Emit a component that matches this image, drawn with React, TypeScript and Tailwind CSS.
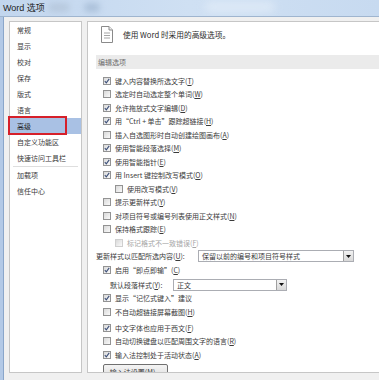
import React from 'react'

type Row =
    | { kind: 'check'; text: string; k?: string; on: boolean; indent?: boolean; off?: boolean; gap?: string }
    | { kind: 'select'; label: string; k: string; value: string; indent?: boolean; gap?: string }

const nav = ['常规', '显示', '校对', '保存', '版式', '语言', '高级', '自定义功能区', '快速访问工具栏']
const nav2 = ['加载项', '信任中心']

const rows: Row[] = [
    { kind: 'check', text: '键入内容替换所选文字', k: 'T', on: true },
    { kind: 'check', text: '选定时自动选定整个单词', k: 'W', on: false },
    { kind: 'check', text: '允许拖放式文字编辑', k: 'D', on: true },
    { kind: 'check', text: '用“Ctrl + 单击”跟踪超链接', k: 'H', on: true },
    { kind: 'check', text: '插入自选图形时自动创建绘图画布', k: 'A', on: false },
    { kind: 'check', text: '使用智能段落选择', k: 'M', on: true },
    { kind: 'check', text: '使用智能指针', k: 'E', on: true },
    { kind: 'check', text: '用 Insert 键控制改写模式', k: 'O', on: true },
    { kind: 'check', text: '使用改写模式', k: 'V', on: false, indent: true },
    { kind: 'check', text: '提示更新样式', k: 'Y', on: false },
    { kind: 'check', text: '对项目符号或编号列表使用正文样式', k: 'N', on: false },
    { kind: 'check', text: '保持格式跟踪', k: 'E', on: false },
    { kind: 'check', text: '标记格式不一致错误', k: 'F', on: false, indent: true, off: true },
    { kind: 'select', label: '更新样式以匹配所选内容', k: 'U', value: '保留以前的编号和项目符号样式' },
    { kind: 'check', text: '启用“即点即输”', k: 'C', on: true },
    { kind: 'select', label: '默认段落样式', k: 'Y', value: '正文', indent: true, gap: 'mt-[1.5px]' },
    { kind: 'check', text: '显示“记忆式键入”建议', on: true },
    { kind: 'check', text: '不自动超链接屏幕截图', k: 'H', on: false },
    { kind: 'check', text: '中文字体也应用于西文', k: 'F', on: true, gap: 'mt-[2.5px]' },
    { kind: 'check', text: '自动切换键盘以匹配周围文字的语言', k: 'R', on: false },
    { kind: 'check', text: '输入法控制处于活动状态', k: 'A', on: true },
]

function Box({ on, off }: { on: boolean; off?: boolean }) {
    return (
        <span
            className={`w-[8px] h-[8px] shrink-0 flex items-center justify-center border bg-gradient-to-br from-[#d9d9d9] to-[#fafafa] ${
                off ? 'border-[#cfcfcf]' : 'border-[#939393]'
            }`}
        >
            {on && (
                <svg width="6" height="6" viewBox="0 0 6 6">
                    <path d="M0.8 3.2 L2.3 4.8 L5.2 0.9" fill="none" stroke="#3d5079" strokeWidth="1.1" />
                </svg>
            )}
        </span>
    )
}

function Key({ k }: { k: string }) {
    return (
        <>
            (<span className="underline underline-offset-1">{k}</span>)
        </>
    )
}

function Select({ value, w }: { value: string; w: string }) {
    return (
        <div className={`${w} h-[12px] flex items-center border border-[#abadb3] bg-white`}>
            <span className="flex-1 pl-[3px] whitespace-nowrap">{value}</span>
            <span className="w-[10px] h-full flex items-center justify-center bg-gradient-to-b from-[#f2f2f2] to-[#d8d8d8] border-l border-[#a0a0a0]">
                <svg width="5" height="3" viewBox="0 0 5 3">
                    <path d="M0 0 H5 L2.5 3 Z" fill="#111" />
                </svg>
            </span>
        </div>
    )
}

function DocIcon() {
    return (
        <svg width="12" height="17" viewBox="0 0 12 17">
            <path d="M0.5 0.5 H8 L11.5 4 V16.5 H0.5 Z" fill="#fff" stroke="#8a8a8a" />
            <path d="M8 0.5 V4 H11.5" fill="#eee" stroke="#8a8a8a" />
            <path d="M3 7 H9 M3 9.5 H9 M3 12 H9" stroke="#a5a5a5" />
        </svg>
    )
}

export default function App() {
    return (
        <div className="w-[379px] h-[380px] overflow-hidden flex flex-col bg-[#f0f0f0] text-[7px] leading-none text-[#3a3a3a] font-['Noto_Sans_CJK_SC',sans-serif]">
            {/* title bar */}
            <div className="relative h-[17px] shrink-0 flex items-center pl-[3px] bg-gradient-to-r from-[#c2d6ee] via-[#cfe0f3] to-[#c7daf0] border-b border-[#9fb5cf] overflow-hidden">
                <span className="absolute left-[48px] top-[3px] w-[22px] h-[9px] rounded-full bg-[#a9b9cc] opacity-50 blur-[3px]" />
                <span className="absolute left-[84px] top-[3px] w-[16px] h-[9px] rounded-full bg-[#8ea6c3] opacity-50 blur-[3px]" />
                <span className="absolute left-[205px] top-[2px] w-[70px] h-[10px] rounded-full bg-[#e6eff9] opacity-70 blur-[4px]" />
                <span className="relative text-[9px] leading-[12px] text-[#1d1d1d] font-['Liberation_Sans','Noto_Sans_CJK_SC',sans-serif]">Word 选项</span>
            </div>

            <div className="flex-1 flex min-h-0 pt-[4px] pb-[7px]">
                <div className="w-[4px] shrink-0 bg-[#b3c9e6] border-r border-[#8aa6ca] -mt-[4px] -mb-[7px]" />

                {/* left nav */}
                <div className="w-[73px] ml-[5px] shrink-0 bg-white border border-[#c6c6c6]">
                    {nav.map((n) => (
                        <div
                            key={n}
                            className={`relative h-[16px] flex items-center pl-[7px] ${n === '高级' ? 'bg-[#a9c1e4] text-[#222]' : ''}`}
                        >
                            {n}
                            {n === '高级' && (
                                <span className="absolute -left-[2px] -top-[2px] w-[59px] h-[19px] border-2 border-[#d6202a]" />
                            )}
                        </div>
                    ))}
                    <div className="mx-[3px] h-px bg-[#dedede]" />
                    {nav2.map((n) => (
                        <div key={n} className="h-[16px] flex items-center pl-[7px]">
                            {n}
                        </div>
                    ))}
                </div>

                {/* right panel */}
                <div className="flex-1 ml-[5px] min-w-0 bg-white border-l border-t border-b border-[#c6c6c6] overflow-hidden pt-[4px]">
                    <div className="h-[17px] flex items-center pl-[13px] gap-[10px]">
                        <DocIcon />
                        <span className="text-[7.7px] leading-[10px] text-[#2b2b2b]">使用 Word 时采用的高级选项。</span>
                    </div>
                    <div className="ml-[8px] mt-[12px] h-[14px] flex items-center pl-[2px] bg-[#ebebeb] text-[#6d6d6d]">
                        编辑选项
                    </div>
                    <div className="mt-[5px] leading-[10px]">
                        {rows.map((r, i) =>
                            r.kind === 'check' ? (
                                <div
                                    key={i}
                                    className={`h-[13.5px] flex items-center gap-[4px] ${r.indent ? 'pl-[27px]' : 'pl-[15px]'} ${
                                        r.off ? 'text-[#a6a6a6]' : ''
                                    } ${r.gap ?? ''}`}
                                >
                                    <Box on={r.on} off={r.off} />
                                    <span className="whitespace-nowrap">
                                        {r.text}
                                        {r.k && <Key k={r.k} />}
                                    </span>
                                </div>
                            ) : (
                                <div
                                    key={i}
                                    className={`h-[13.5px] flex items-center whitespace-nowrap ${r.indent ? 'pl-[22px]' : 'pl-[8px]'} ${r.gap ?? ''}`}
                                >
                                    <span className={r.indent ? 'w-[63px]' : 'w-[102px]'}>
                                        {r.label}
                                        <Key k={r.k} />:
                                    </span>
                                    <Select value={r.value} w={r.indent ? 'w-[114px]' : 'w-[156px]'} />
                                </div>
                            )
                        )}
                        <div className="ml-[15px] mt-[2px] w-[65px] h-[16px] flex items-center justify-center rounded-[2px] border border-[#707070] bg-gradient-to-b from-[#f4f4f4] to-[#dcdcdc]">
                            输入法设置<Key k="M" />...
                        </div>
                    </div>
                </div>
            </div>
        </div>
    )
}
